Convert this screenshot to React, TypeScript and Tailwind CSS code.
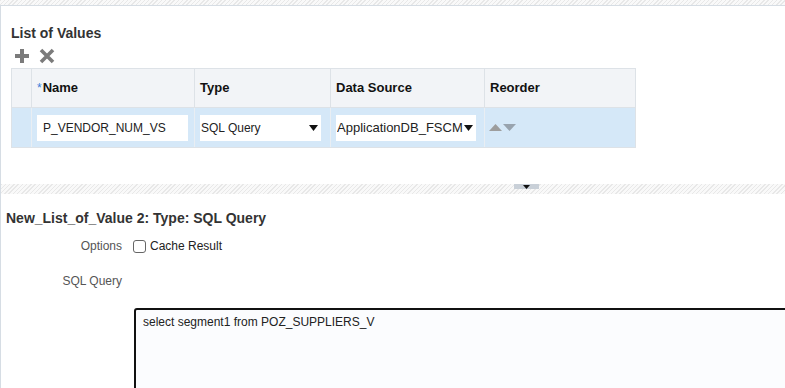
import React from 'react'

const hatch =
  'bg-[image:repeating-linear-gradient(135deg,#e8e8e8_0px,#e8e8e8_1px,#f9f9f9_1px,#f9f9f9_3px)]'

function PlusIcon() {
  return (
    <svg width="16" height="16" viewBox="0 0 16 16">
      <path d="M8 1v14M1 8h14" stroke="#7b7b7b" strokeWidth="4" />
    </svg>
  )
}

function CloseIcon() {
  return (
    <svg width="16" height="16" viewBox="0 0 16 16">
      <path d="M2 2l12 12M14 2L2 14" stroke="#7b7b7b" strokeWidth="3.6" />
    </svg>
  )
}

function DownTriangle() {
  return (
    <svg width="9" height="6" viewBox="0 0 9 6" className="shrink-0">
      <path d="M0 0h9L4.5 6z" fill="#111" />
    </svg>
  )
}

function Select({
  value,
  width,
  textWidth,
  size,
}: {
  value: string
  width: string
  textWidth: string
  size: string
}) {
  return (
    <div className={`${width} h-[26px] bg-white flex items-center pl-[1px] pr-[3px]`}>
      <span className={`${textWidth} ${size} overflow-hidden whitespace-nowrap text-[#222]`}>{value}</span>
      <div className="flex-1" />
      <DownTriangle />
    </div>
  )
}

export default function App() {
  return (
    <div className="w-[785px] h-[388px] overflow-hidden bg-white font-['Liberation_Sans',Arial,sans-serif] flex flex-col">
      <div className={`h-[5px] shrink-0 ${hatch}`} />
      <div className="flex-1 flex flex-col border-l border-t border-[#d6dde4]">
        {/* List of values panel */}
        <div className="h-[178px] shrink-0 pl-[10px] pt-[19px]">
          <h2 className="h-[16px] leading-[16px] text-[14px] font-bold text-[#333]">List of Values</h2>
          <div className="mt-[7px] flex items-center gap-[9px] pl-[3px]">
            <PlusIcon />
            <CloseIcon />
          </div>
          <div className="mt-[4px] w-[625px] border border-[#dde2e7]">
            <div className="flex h-[39px] bg-[#f2f4f7] border-b border-[#dde2e7] text-[13px] font-bold text-[#111]">
              <div className="w-[20px] border-r border-[#dde2e7]" />
              <div className="w-[163px] border-r border-[#dde2e7] flex items-center pl-[5px]">
                <span className="text-[#3b7dd8] font-normal text-[12px] mr-[1px]">*</span>Name
              </div>
              <div className="w-[136px] border-r border-[#dde2e7] flex items-center pl-[5px]">Type</div>
              <div className="w-[154px] border-r border-[#dde2e7] flex items-center pl-[5px]">Data Source</div>
              <div className="flex-1 flex items-center pl-[5px]">Reorder</div>
            </div>
            <div className="flex h-[39px] bg-[#d5e8f8]">
              <div className="w-[20px] border-r border-[#e9eef3]" />
              <div className="w-[163px] border-r border-[#e9eef3] flex items-center pl-[5px]">
                <div className="w-[151px] h-[26px] bg-white flex items-center pl-[6px] text-[12px] text-[#222]">
                  P_VENDOR_NUM_VS
                </div>
              </div>
              <div className="w-[136px] border-r border-[#e9eef3] flex items-center pl-[5px]">
                <Select value="SQL Query" width="w-[121px]" textWidth="w-[100px]" size="text-[12px]" />
              </div>
              <div className="w-[154px] border-r border-[#e9eef3] flex items-center pl-[5px]">
                <Select value="ApplicationDB_FSCM" width="w-[140px]" textWidth="w-[127px]" size="text-[13px]" />
              </div>
              <div className="flex-1 flex items-center pl-[4px] gap-[1px]">
                <svg width="13" height="7" viewBox="0 0 13 7">
                  <path d="M0 7L6.5 0L13 7z" fill="#9d9d9d" />
                </svg>
                <svg width="13" height="7" viewBox="0 0 13 7">
                  <path d="M0 0h13L6.5 7z" fill="#98a3ae" />
                </svg>
              </div>
            </div>
          </div>
        </div>

        {/* splitter */}
        <div className={`h-[10px] shrink-0 flex items-start ${hatch}`}>
          <div className="ml-[513px] w-[25px] h-[5px] bg-[#c9d0d8] flex justify-center items-center">
            <svg width="7" height="4" viewBox="0 0 7 4">
              <path d="M0 0h7L3.5 4z" fill="#111" />
            </svg>
          </div>
        </div>

        {/* detail panel */}
        <div className="flex-1 pt-[16px] pl-[5px]">
          <h3 className="h-[16px] leading-[16px] text-[14px] font-bold text-[#333]">
            New_List_of_Value 2: Type: SQL Query
          </h3>
          <div className="-ml-[5px] mt-[12px] flex items-center h-[16px]">
            <div className="w-[121px] text-right text-[12px] leading-[16px] text-[#555]">Options</div>
            <div className="ml-[11px] w-[13px] h-[13px] rounded-[3px] border border-[#666] bg-white" />
            <span className="ml-[4px] text-[12px] leading-[16px] text-[#222]">Cache Result</span>
          </div>
          <div className="-ml-[5px] mt-[19px] flex h-[16px]">
            <div className="w-[121px] text-right text-[12px] leading-[16px] text-[#555]">SQL Query</div>
          </div>
          <div className="mt-[19px] ml-[128px] w-[700px] h-[120px] border-2 border-[#111] rounded-tl-[3px] bg-[#fbfcfe] pl-[7px] pt-[4px] text-[12px] leading-[16px] text-[#222]">
            select segment1 from POZ_SUPPLIERS_V
          </div>
        </div>
      </div>
    </div>
  )
}
